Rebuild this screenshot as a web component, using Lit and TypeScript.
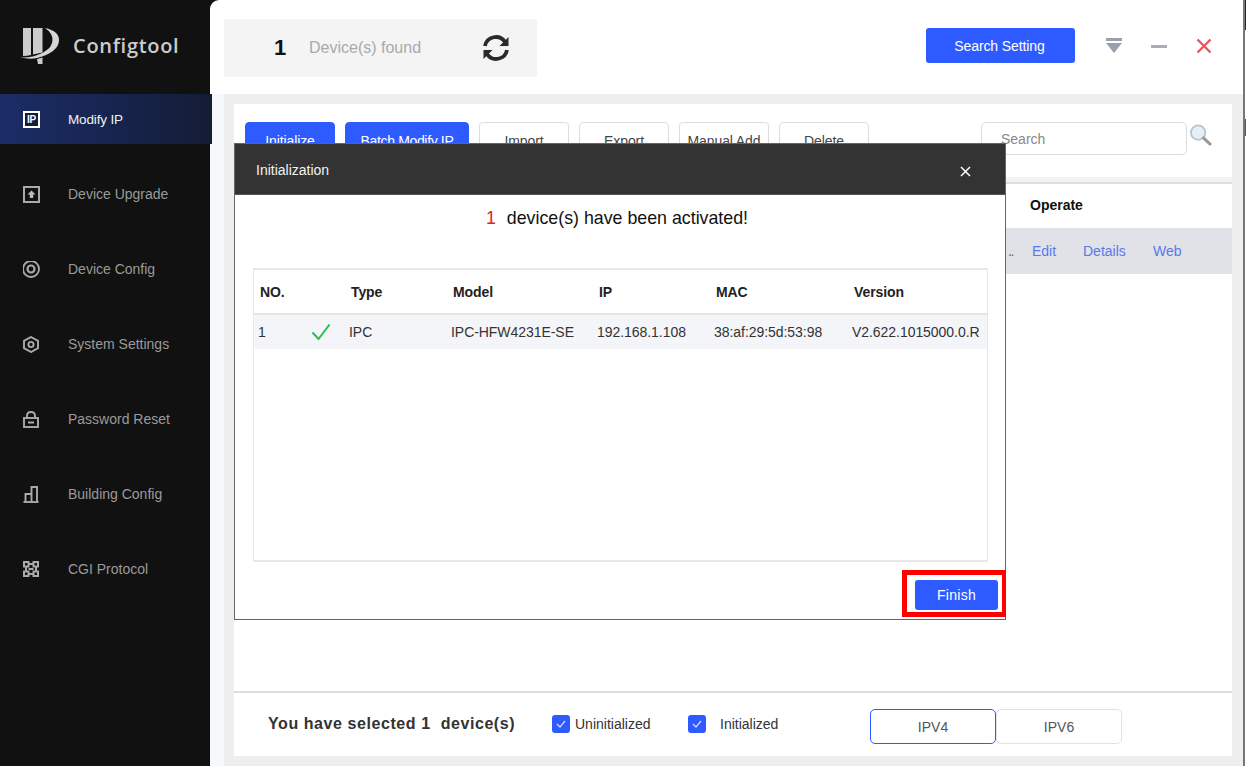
import { LitElement, html, css, svg } from "lit";
import { customElement } from "lit/decorators.js";

const icons: Record<string, unknown> = {
  ip: svg`<rect x="1" y="1" width="15" height="15" fill="#141c3c" stroke="#fff" stroke-width="2"/><text x="8.5" y="12" font-size="10" font-weight="700" text-anchor="middle" fill="#fff" font-family="Liberation Sans">IP</text>`,
  upgrade: svg`<rect x="1" y="1" width="15" height="15" fill="none" stroke="#aaa" stroke-width="2"/><path d="M8.5 4.5 L12.5 8.5 H10.2 V12 H6.8 V8.5 H4.5 Z" fill="#bbb"/>`,
  config: svg`<circle cx="8" cy="8" r="8" fill="none" stroke="#aaa" stroke-width="1.9"/><circle cx="8" cy="8" r="3.5" fill="none" stroke="#aaa" stroke-width="2.2"/>`,
  settings: svg`<path d="M8 1 L15 4.8 V12.2 L8 16 L1 12.2 V4.8 Z" fill="none" stroke="#aaa" stroke-width="1.9"/><circle cx="8" cy="8.5" r="2.6" fill="none" stroke="#aaa" stroke-width="1.9"/>`,
  lock: svg`<rect x="1" y="7" width="14" height="9" fill="none" stroke="#aaa" stroke-width="1.9"/><path d="M4 7 V5 Q4 1 8 1 Q12 1 12 5 V7" fill="none" stroke="#aaa" stroke-width="1.9"/><rect x="5" y="10.5" width="6" height="2" fill="#aaa"/>`,
  building: svg`<path d="M0.5 16 H15.5" stroke="#aaa" stroke-width="1.9"/><path d="M2.5 16 V8 H8.5 V1 H14 V16 M8.5 8 V16" fill="none" stroke="#aaa" stroke-width="1.9"/>`,
  cgi: svg`<g fill="none" stroke="#aaa" stroke-width="2"><rect x="1" y="1" width="4.5" height="4.5"/><rect x="10.5" y="1" width="4.5" height="4.5"/><rect x="1" y="10.5" width="4.5" height="4.5"/><rect x="10.5" y="10.5" width="4.5" height="4.5"/><path d="M5.5 3 H10.5 M5.5 13 H10.5 M3 5.5 V10.5 M13 5.5 V10.5 M5.5 8 H10.5"/></g>`,
};

const nav = [
  ["ip", "Modify IP"],
  ["upgrade", "Device Upgrade"],
  ["config", "Device Config"],
  ["settings", "System Settings"],
  ["lock", "Password Reset"],
  ["building", "Building Config"],
  ["cgi", "CGI Protocol"],
];

@customElement("app-root")
export class AppRoot extends LitElement {
  static styles = css`
    :host { display: block; width: 1246px; height: 766px; overflow: hidden; font-family: "Liberation Sans", Arial, sans-serif; font-size: 14px; }
    .app { display: flex; height: 766px; background: #111; }
    .sidebar { width: 210px; flex: none; background: #111; display: flex; flex-direction: column; }
    .logo { height: 94px; flex: none; display: flex; align-items: flex-start; padding: 27px 0 0 20px; box-sizing: border-box; gap: 13px; }
    .logo svg { width: 40px; height: 38px; }
    .logo span { font-family: "Open Sans", sans-serif; font-weight: 600; font-size: 20px; color: #ccc; letter-spacing: 0.7px; line-height: 38px; }
    nav { display: flex; flex-direction: column; gap: 25px; }
    .item { position: relative; width: 212px; height: 50px; display: flex; align-items: center; padding-left: 23px; box-sizing: border-box; color: #9a9a9a; }
    .item svg { width: 17px; height: 17px; margin-right: 28px; flex: none; }
    .item.active { background: linear-gradient(90deg, #1b2d68 0%, #16234a 60%, #141c36 100%); color: #f0f0f0; font-size: 13.5px; letter-spacing: -0.15px; z-index: 1; }
    .main { position: relative; width: 1033px; flex: none; background: #fff; border-top-left-radius: 9px; display: flex; flex-direction: column; }
    .edge { flex: 1; background: #fff; border-left: 2px solid #777; display: flex; flex-direction: column; }
    .edge .e1 { height: 30px; flex: none; background: #1c2b3f; }
    .edge .e2 { height: 89px; flex: none; }
    .edge .e3 { height: 17px; flex: none; background: #1565c0; }
    .top { height: 94px; flex: none; display: flex; align-items: flex-start; padding: 19px 0 0 14px; box-sizing: border-box; }
    .found { width: 313px; height: 58px; background: #f4f4f4; display: flex; align-items: center; padding-left: 50px; box-sizing: border-box; }
    .found b { font-size: 22px; color: #111; width: 35px; }
    .found span { font-size: 16px; color: #aaa; width: 173px; }
    .found svg { width: 28px; height: 28px; }
    .btn-search { margin-left: 389px; margin-top: 9px; width: 149px; height: 35px; padding-right: 2px; box-sizing: border-box; background: #2e5bff; color: #fff; border-radius: 3px; display: flex; align-items: center; justify-content: center; letter-spacing: -0.1px; }
    .winctl { display: flex; align-items: center; gap: 29px; margin: 9px 0 0 31px; height: 35px; }
    .winctl svg { width: 16px; height: 16px; display: block; }
    .body { flex: 1; border-left: 14px solid #f7f8fc; background: #eee; padding: 10px 11px 10px 10px; display: flex; min-height: 0; }
    .panel { flex: 1; min-width: 0; background: #fff; display: flex; flex-direction: column; }
    .toolbar { height: 73px; flex: none; display: flex; padding: 18px 0 0 11px; box-sizing: border-box; gap: 10px; background: #fff; }
    .tb { width: 90px; height: 38px; box-sizing: border-box; border: 1px solid #ddd; border-radius: 4px; color: #444; display: flex; align-items: center; justify-content: center; background: #fff; letter-spacing: -0.1px; }
    .tb.primary { background: #2e5bff; border-color: #2e5bff; color: #fff; }
    .tb.wide { width: 124px; letter-spacing: -0.35px; }
    .search { margin-left: 102px; width: 206px; height: 33px; border: 1px solid #ddd; border-radius: 5px; box-sizing: border-box; padding-left: 19px; color: #888; display: flex; align-items: center; }
    .mag { width: 23px; height: 23px; margin: 2px 0 0 -8px; }
    .thead { height: 51px; flex: none; border-top: 5px solid #f1f2f6; box-sizing: border-box; }
    .thead div { height: 46px; border-top: 2px solid #ddd; box-sizing: border-box; padding: 0 0 2px 796px; display: flex; align-items: center; font-weight: 700; color: #111; }
    .trow { height: 46px; flex: none; background: #e0e2e7; display: flex; align-items: center; padding-left: 774px; color: #5a78ee; }
    .trow i { font-style: normal; color: #666; width: 24px; letter-spacing: -1.5px; }
    .trow span:nth-of-type(1) { width: 51px; }
    .trow span:nth-of-type(2) { width: 70px; }
    .spacer { flex: 1; }
    .foot { height: 65px; flex: none; border-top: 2px solid #ddd; display: flex; align-items: flex-start; padding-left: 34px; box-sizing: border-box; color: #333; }
    .sel { font-size: 16px; font-weight: 700; color: #333; letter-spacing: 0.57px; white-space: pre; width: 284px; margin-top: 22px; }
    .chk { display: flex; align-items: center; margin-top: 22px; height: 18px; }
    .box { width: 18px; height: 18px; background: #2e5bff; border-radius: 3px; flex: none; display: flex; align-items: center; justify-content: center; }
    .box svg { width: 10px; height: 8px; }
    .c1 { width: 136px; } .c1 span { margin-left: 5px; }
    .c2 { width: 182px; } .c2 span { margin-left: 14px; }
    .seg { width: 126px; height: 35px; box-sizing: border-box; border: 1px solid #e2e2e2; border-radius: 5px; margin-top: 16px; display: flex; align-items: center; justify-content: center; color: #555; }
    .seg.on { border-color: #2e5bff; }
    .modal { position: absolute; left: 24px; top: 143px; width: 772px; height: 477px; box-sizing: border-box; border: 1px solid #666; background: #fff; display: flex; flex-direction: column; }
    .mhead { height: 51px; flex: none; background: #333; color: #f2f2f2; display: flex; align-items: center; justify-content: space-between; padding: 1px 34px 0 21px; box-sizing: border-box; border-bottom: 1px solid #555; }
    .mhead svg { width: 11px; height: 11px; margin-top: 4px; }
    .msg { height: 73px; flex: none; padding: 13px 6px 0 0; box-sizing: border-box; text-align: center; font-size: 17.8px; color: #111; }
    .msg b { font-weight: 400; color: #e0261c; margin-right: 11px; }
    .mtable { margin-left: 18px; width: 735px; height: 294px; flex: none; box-sizing: border-box; border: 2px solid #e8e8ec; border-left-width: 1px; border-right-width: 1px; display: flex; flex-direction: column; }
    .mrow { display: grid; grid-template-columns: 53px 38px 102px 146px 117px 138px 1fr; align-items: center; flex: none; box-sizing: border-box; }
    .mrow.h { height: 45px; font-weight: 700; color: #222; border-bottom: 2px solid #e4e4e6; padding-left: 6px; letter-spacing: -0.1px; }
    .mrow.d { height: 34px; background: #f3f5f9; color: #333; padding-left: 4px; letter-spacing: -0.05px; }
    .mrow.d svg { width: 20px; height: 18px; }
    .mfoot { flex: 1; display: flex; justify-content: flex-end; align-items: flex-end; padding-bottom: 2px; }
    .mark { box-sizing: border-box; width: 104px; height: 47px; border: 5px solid #f00; border-right-width: 4px; padding: 5px 0 0 8px; margin-right: -1px; }
    .finish { width: 83px; height: 30px; background: #2e5bff; color: #fff; border-radius: 3px; display: flex; align-items: center; justify-content: center; letter-spacing: 0.3px; }
  `;

  render() {
    return html`<div class="app">
      <aside class="sidebar">
        <div class="logo">
          <svg viewBox="0 0 40 38">
            <path d="M3 1 H11 V28 Q7 29 3 29 Z" fill="#ccc"/>
            <path d="M13 1 H22.5 V25.5 L13 27.5 Z" fill="#ccc"/>
            <path d="M25 1 Q39 4 39 13 Q39 25 17 31 Q10 32.5 0 30.5 Q14 31 24 25 Q32.5 20 32.5 13 Q32.5 6 25 1 Z" fill="#d4d4d4"/>
            <path d="M17 32 L22.5 30.5 V37 H18 Z" fill="#ccc"/>
          </svg>
          <span>Configtool</span>
        </div>
        <nav>
          ${nav.map(
            ([k, t], i) => html`<div class="item ${i === 0 ? "active" : ""}">
              <svg viewBox="0 0 17 17">${icons[k]}</svg>${t}
            </div>`
          )}
        </nav>
      </aside>
      <main class="main">
        <header class="top">
          <div class="found">
            <b>1</b><span>Device(s) found</span>
            <svg viewBox="0 0 28 28" fill="none" stroke="#2a2a2a" stroke-width="3.8">
              <path d="M3 12 A11 11 0 0 1 23 8"/>
              <path d="M25 16 A11 11 0 0 1 5 20"/>
              <path d="M26.5 3 V12 H17.5 Z" fill="#2a2a2a" stroke="none"/>
              <path d="M1.5 25 V16 H10.5 Z" fill="#2a2a2a" stroke="none"/>
            </svg>
          </div>
          <div class="btn-search">Search Setting</div>
          <div class="winctl">
            <svg viewBox="0 0 16 16"><rect y="0" width="16" height="3" fill="#9aa0ac"/><path d="M0 5 H16 L8 15 Z" fill="#9aa0ac"/></svg>
            <svg viewBox="0 0 16 16"><rect y="7" width="16" height="3" fill="#a8adb8"/></svg>
            <svg viewBox="0 0 16 16"><path d="M1.5 1.5 L14.5 14.5 M14.5 1.5 L1.5 14.5" stroke="#e8575c" stroke-width="2.4"/></svg>
          </div>
        </header>
        <section class="body">
          <div class="panel">
            <div class="toolbar">
              <div class="tb primary">Initialize</div>
              <div class="tb primary wide">Batch Modify IP</div>
              <div class="tb">Import</div>
              <div class="tb">Export</div>
              <div class="tb">Manual Add</div>
              <div class="tb">Delete</div>
              <div class="search">Search</div>
              <svg class="mag" viewBox="0 0 24 24">
                <circle cx="9.5" cy="9" r="7.5" fill="#e6eef6" stroke="#b4c4d0" stroke-width="1.8"/>
                <path d="M15 14.5 L22 21" stroke="#999" stroke-width="3" stroke-linecap="round"/>
              </svg>
            </div>
            <div class="thead"><div>Operate</div></div>
            <div class="trow"><i>..</i><span>Edit</span><span>Details</span><span>Web</span></div>
            <div class="spacer"></div>
            <div class="foot">
              <div class="sel">You have selected 1  device(s)</div>
              <div class="chk c1"><div class="box"><svg viewBox="0 0 10 8"><path d="M1 4 L4 7 L9 1" fill="none" stroke="#cfd8ff" stroke-width="1.3"/></svg></div><span>Uninitialized</span></div>
              <div class="chk c2"><div class="box"><svg viewBox="0 0 10 8"><path d="M1 4 L4 7 L9 1" fill="none" stroke="#cfd8ff" stroke-width="1.3"/></svg></div><span>Initialized</span></div>
              <div class="seg on">IPV4</div>
              <div class="seg">IPV6</div>
            </div>
          </div>
        </section>
        <div class="modal">
          <div class="mhead"><span>Initialization</span>
            <svg viewBox="0 0 11 11"><path d="M1 1 L10 10 M10 1 L1 10" stroke="#fff" stroke-width="1.5"/></svg>
          </div>
          <div class="msg"><b>1</b>device(s) have been activated!</div>
          <div class="mtable">
            <div class="mrow h"><span>NO.</span><span></span><span>Type</span><span>Model</span><span>IP</span><span>MAC</span><span>Version</span></div>
            <div class="mrow d"><span>1</span>
              <svg viewBox="0 0 20 18"><path d="M1.5 9.5 L7.5 16 L18.5 1.5" fill="none" stroke="#22c24a" stroke-width="2"/></svg>
              <span>IPC</span><span>IPC-HFW4231E-SE</span><span>192.168.1.108</span><span>38:af:29:5d:53:98</span><span>V2.622.1015000.0.R</span></div>
          </div>
          <div class="mfoot"><div class="mark"><div class="finish">Finish</div></div></div>
        </div>
      </main>
      <div class="edge"><div class="e1"></div><div class="e2"></div><div class="e3"></div></div>
    </div>`;
  }
}
